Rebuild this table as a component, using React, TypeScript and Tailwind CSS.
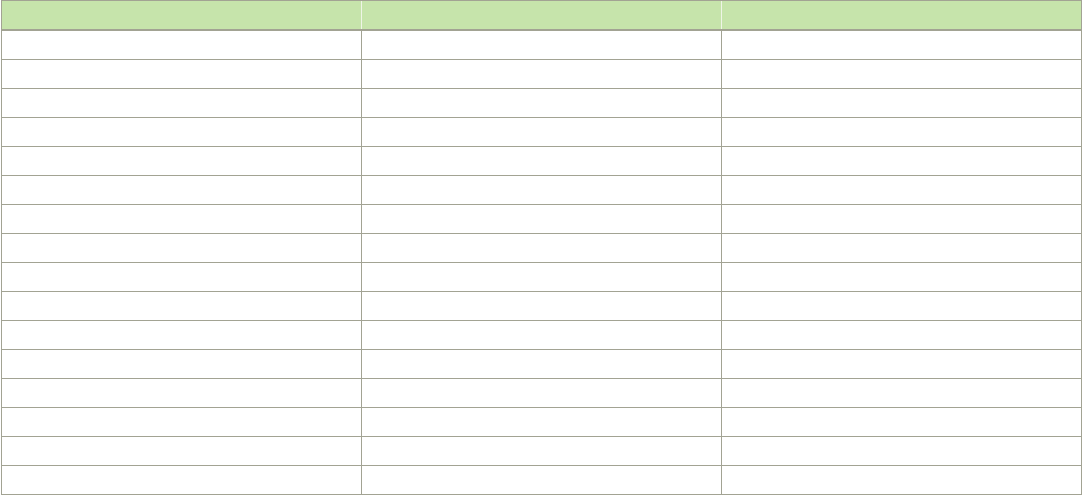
import React from 'react';

const rows = Array.from({ length: 16 }, (_, i) => i);

export default function App() {
  return (
    <div className="bg-white w-[1082px] h-[497px]">
      <div className="ml-[1px] w-[1081px] border-t border-l border-r border-[#a2a393]">
        {/* header */}
        <div className="flex h-[30px] bg-[#c6e4ab] border-b-2 border-[#a2a393]">
          <div className="flex-1 border-r border-[#eef5e6]" />
          <div className="flex-1 border-r border-[#eef5e6]" />
          <div className="flex-1" />
        </div>

        {/* body */}
        {rows.map((r) => (
          <div key={r} className="flex h-[29px] border-b border-[#a2a393]">
            <div className="flex-1 border-r border-[#a2a393]" />
            <div className="flex-1 border-r border-[#a2a393]" />
            <div className="flex-1" />
          </div>
        ))}
      </div>
    </div>
  );
}
